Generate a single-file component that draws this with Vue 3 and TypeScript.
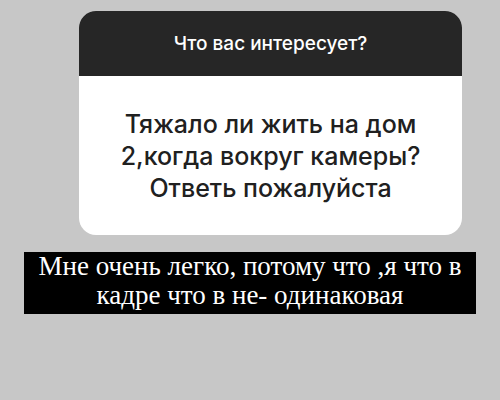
<script setup lang="ts">
const title: string = 'Что вас интересует?'
const question: string[] = ['Тяжало ли жить на дом', '2,когда вокруг камеры?', 'Ответь пожалуйста']
const answer: string[] = ['Мне очень легко, потому что ,я что в', 'кадре что в не- одинаковая']
</script>

<template>
  <main class="story">
    <div class="card-row">
      <section class="card">
        <h1 class="card-title">{{ title }}</h1>
        <p class="question">
          <span v-for="line in question" :key="line" class="line">{{ line }}</span>
        </p>
      </section>
    </div>
    <p class="answer">
      <span v-for="line in answer" :key="line" class="line">{{ line }}</span>
    </p>
  </main>
</template>

<style>
body {
  margin: 0;
  background: #c7c7c7;
}
</style>

<style scoped>
.story {
  box-sizing: border-box;
  min-height: 100vh;
  padding: 11px 24px 24px;
  background: #c7c7c7;
}

.card-row {
  padding-left: 41px;
}

.card {
  max-width: 383px;
  margin: 0 auto;
  overflow: hidden;
  border-radius: 17px;
  background: #fff;
  font-family: Inter, "Liberation Sans", sans-serif;
  text-align: center;
}

.card-title {
  margin: 0;
  padding: 21px 16px 20px;
  background: #262626;
  color: #fff;
  font-size: 19px;
  font-weight: 500;
  line-height: 24px;
}

.question {
  margin: 0;
  padding: 32px 16px 31px;
  color: #202020;
  font-size: 25px;
  font-weight: 500;
  line-height: 32px;
}

.answer {
  margin: 17px 0 0;
  padding: 0 0 4px;
  background: #000;
  color: #fff;
  font-family: "Liberation Serif", serif;
  font-size: 27px;
  line-height: 29px;
  text-align: center;
}

.line {
  display: block;
  white-space: nowrap;
}
</style>
